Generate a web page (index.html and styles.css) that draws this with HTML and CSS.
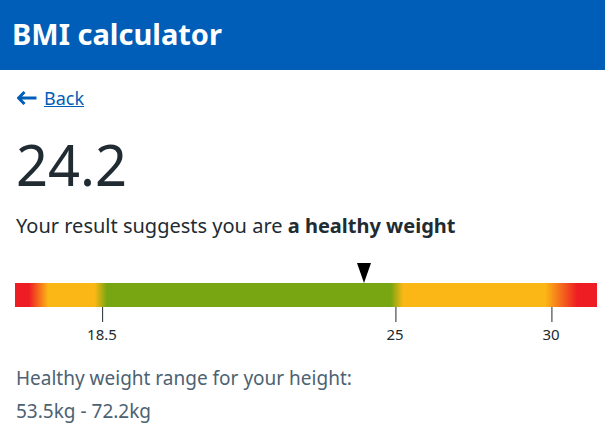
FILE: index.html
```html
<!DOCTYPE html>
<html lang="en">
<head>
    <meta charset="UTF-8">
    <meta name="viewport" content="width=device-width, initial-scale=1.0">
    <title>BMI calculator</title>
    <link rel="stylesheet" href="styles.css">
</head>
<body>

    <header class="site-header">
        <h1 class="site-title">BMI calculator</h1>
    </header>

    <main class="content">
        <a class="back-link" href="#">
            <svg class="back-icon" viewBox="0 0 20 14" width="20" height="14" aria-hidden="true">
                <path d="M7.5 1 L1.5 7 L7.5 13 M2 7 H19.5" fill="none" stroke="#005eb8" stroke-width="3" stroke-linejoin="miter"/>
            </svg>
            <span>Back</span>
        </a>

        <p class="bmi-value">24.2</p>

        <p class="bmi-summary">Your result suggests you are <strong>a healthy weight</strong></p>

        <div class="scale">
            <div class="scale-marker" style="left: 60%;"></div>
            <div class="scale-bar"></div>
            <div class="scale-ticks">
                <span class="tick" style="left: 14.95%;">18.5</span>
                <span class="tick" style="left: 65.3%;">25</span>
                <span class="tick" style="left: 92.1%;">30</span>
            </div>
        </div>

        <p class="range-label">Healthy weight range for your height:</p>
        <p class="range-value">53.5kg - 72.2kg</p>
    </main>

</body>
</html>
```

FILE: styles.css
```css
body {
    margin: 0;
    font-family: 'Segoe UI', 'Noto Sans', sans-serif;
    color: #212b32;
    background-color: #fff;
}

.site-header {
    background-color: #005eb8;
    height: 70px;
    display: flex;
    align-items: center;
    padding: 0 12px;
}
.site-title {
    margin: 0;
    color: #fff;
    font-size: 29px;
    font-weight: bold;
    line-height: 1;
    padding-bottom: 4px;
}

.content {
    padding: 0 16px;
}

.back-link {
    display: inline-flex;
    align-items: center;
    gap: 7px;
    margin-top: 19px;
    color: #005eb8;
    font-size: 18px;
    line-height: 18px;
}
.back-icon {
    margin-left: 1px;
}

.bmi-value {
    margin: 24px 0 0;
    font-size: 56px;
    line-height: 60px;
}

.bmi-summary {
    margin: 20px 0 0;
    font-size: 20px;
    line-height: 24px;
}

/* bar runs a little past the right text edge */
.scale {
    position: relative;
    margin: 25px -8px 0 -1px;
    padding-top: 20px;
}
.scale-marker {
    position: absolute;
    top: 0;
    width: 0;
    height: 0;
    margin-left: -7px;
    border-left: 7px solid transparent;
    border-right: 7px solid transparent;
    border-top: 20px solid #000;
}
.scale-bar {
    height: 24px;
    background: linear-gradient(to right,
        #ee1d24 0%, #ee1d24 2.4%,
        #fbb715 5.7%, #fbb715 13.7%,
        #78a612 15.8%, #78a612 64.6%,
        #fbb715 66.7%, #fbb715 91.1%,
        #ee1d24 96.6%, #ee1d24 100%);
}
.scale-ticks {
    position: relative;
    height: 36px;
}
.tick {
    position: absolute;
    top: 0;
    transform: translateX(-50%);
    padding-top: 18px;
    font-size: 15px;
    line-height: 18px;
}
.tick::before {
    content: '';
    position: absolute;
    top: 0;
    left: 50%;
    width: 1px;
    height: 15px;
    background-color: #212b32;
}

.range-label,
.range-value {
    color: #4c6272;
    font-size: 19px;
    line-height: 24px;
}
.range-label {
    margin: 23px 0 0;
}
.range-value {
    margin: 9px 0 0;
}
```
